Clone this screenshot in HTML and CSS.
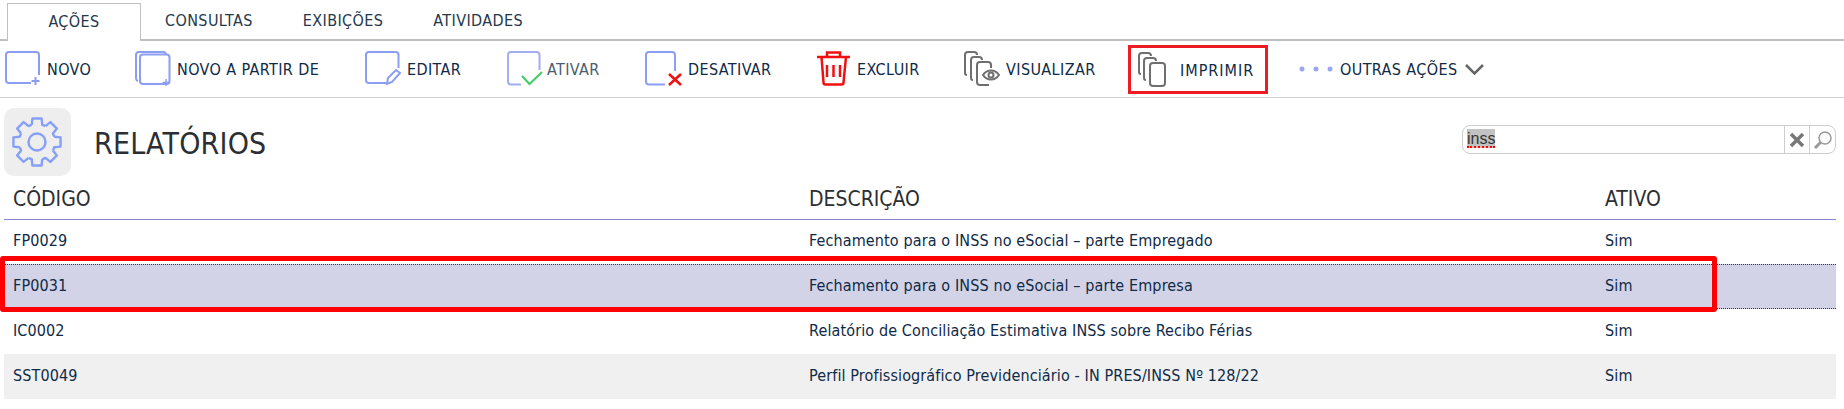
FILE: index.html
```html
<!DOCTYPE html>
<html lang="pt-BR">

<head>
  <meta charset="UTF-8">
  <title>Relatórios</title>
  <link rel="stylesheet" href="styles.css">
</head>

<body>
  <nav class="tabs">
    <div class="tabs__item tabs__item--active">AÇÕES</div>
    <div class="tabs__item">CONSULTAS</div>
    <div class="tabs__item">EXIBIÇÕES</div>
    <div class="tabs__item">ATIVIDADES</div>
  </nav>

  <div class="toolbar">
    <div class="action action--new">
      <svg class="action__icon" width="36" height="36" viewBox="0 0 36 36">
        <path class="blue" d="M34 24V4a3 3 0 0 0-3-3H4a3 3 0 0 0-3 3v25a3 3 0 0 0 3 3h22" />
        <path class="blue" d="M30.500 26v8M26.500 30h8" />
      </svg>
      <span class="action__label">NOVO</span>
    </div>
    <div class="action action--copy">
      <svg class="action__icon" width="36" height="36" viewBox="0 0 36 36">
        <path class="blue" d="M3 30a3 3 0 0 1-2-3V4a3 3 0 0 1 3-3h24a3 3 0 0 1 3 3" />
        <rect class="blue blue--white" x="5" y="3.500" width="29.500" height="29.500" rx="3" />
        <path class="blue blue--plus" d="M31 28v7M27.500 31.500h7" />
      </svg>
      <span class="action__label">NOVO A PARTIR DE</span>
    </div>
    <div class="action action--edit">
      <svg class="action__icon" width="36" height="36" viewBox="0 0 36 36">
        <path class="blue" d="M33.500 17V4a3 3 0 0 0-3-3H4a3 3 0 0 0-3 3v25a3 3 0 0 0 3 3h18" />
        <path class="blue" d="M22 33l1-6 8-8 4 3-8 9z" />
      </svg>
      <span class="action__label">EDITAR</span>
    </div>
    <div class="action action--on">
      <svg class="action__icon" width="36" height="36" viewBox="0 0 36 36">
        <path class="blue blue--light" d="M32.500 19V4a3 3 0 0 0-3-3H4a3 3 0 0 0-3 3v26.500a3 3 0 0 0 3 3h10" />
        <path class="green" d="M15 25l7.500 8L35 21" />
      </svg>
      <span class="action__label">ATIVAR</span>
    </div>
    <div class="action action--off">
      <svg class="action__icon" width="37" height="36" viewBox="0 0 37 36">
        <path class="blue" d="M30 20V4a3 3 0 0 0-3-3H4a3 3 0 0 0-3 3v26.500a3 3 0 0 0 3 3h16" />
        <path class="red" d="M24 23l12 11M36 23L24 34" />
      </svg>
      <span class="action__label">DESATIVAR</span>
    </div>
    <div class="action action--delete">
      <svg class="action__icon" width="35" height="36" viewBox="0 0 35 36">
        <path class="red" d="M1 6h33M11 6V1.500h13V6M5.500 6l2 25.500a2 2 0 0 0 2 2h16a2 2 0 0 0 2-2L30 6" />
        <path class="red" d="M11 14v12M17.500 14v12M24 14v12" />
      </svg>
      <span class="action__label">EXCLUIR</span>
    </div>
    <div class="action action--view">
      <svg class="action__icon" width="36" height="36" viewBox="0 0 36 36">
        <path class="gray" d="M3 24a2 2 0 0 1-2-2V4a3 3 0 0 1 3-3h6a3 3 0 0 1 3 3" />
        <path class="gray" d="M9 29a2 2 0 0 1-2-2V9a3 3 0 0 1 3-3h5a3 3 0 0 1 3 3" />
        <path class="gray" d="M25 34H16a3 3 0 0 1-3-3V14a3 3 0 0 1 3-3h8a3 3 0 0 1 3 3v3" />
        <path class="gray gray--white" d="M19 24c4-6 12-6 16 0-4 6-12 6-16 0z" />
        <circle class="gray" cx="27" cy="24" r="2.500" />
      </svg>
      <span class="action__label">VISUALIZAR</span>
    </div>
    <div class="action action--print">
      <svg class="action__icon" width="28" height="36" viewBox="0 0 28 36">
        <path class="gray" d="M3 22a2 2 0 0 1-2-2V4a3 3 0 0 1 3-3h6a3 3 0 0 1 3 3" />
        <path class="gray" d="M8 28a2 2 0 0 1-2-2V9a3 3 0 0 1 3-3h6a3 3 0 0 1 3 3" />
        <rect class="gray" x="12" y="11" width="15" height="23" rx="3" />
      </svg>
      <span class="action__label">IMPRIMIR</span>
    </div>
    <div class="action action--more">
      <svg class="action__dots" width="36" height="6" viewBox="0 0 36 6">
        <circle cx="4" cy="3" r="2.500" />
        <circle cx="18" cy="3" r="2.500" />
        <circle cx="32" cy="3" r="2.500" />
      </svg>
      <span class="action__label">OUTRAS AÇÕES</span>
      <svg class="action__chevron" width="19" height="11" viewBox="0 0 19 11">
        <path d="M1 1l8.500 8.500L18 1" />
      </svg>
    </div>
  </div>

  <header class="page-head">
    <div class="page-head__badge">
      <svg width="67" height="68" viewBox="-33 -34 67 68">
        <defs>
          <path id="tooth" d="M-5.260 -17.210L-4.580 -23.560L4.580 -23.560L5.260 -17.210A18 18 0 0 1 8.450 -15.890" />
        </defs>
        <g class="gear">
          <use href="#tooth" />
          <use href="#tooth" transform="rotate(45)" />
          <use href="#tooth" transform="rotate(90)" />
          <use href="#tooth" transform="rotate(135)" />
          <use href="#tooth" transform="rotate(180)" />
          <use href="#tooth" transform="rotate(225)" />
          <use href="#tooth" transform="rotate(270)" />
          <use href="#tooth" transform="rotate(315)" />
          <circle r="8.500" />
        </g>
      </svg>
    </div>

    <h1 class="page-head__title">RELATÓRIOS</h1>

    <div class="search">
      <div class="search__field"><span class="search__term">inss</span></div>
      <div class="search__btn">
        <svg width="16" height="16" viewBox="0 0 16 16">
          <path class="search__x" d="M2 2l12 12M14 2L2 14" />
        </svg>
      </div>
      <div class="search__btn search__btn--last">
        <svg width="20" height="20" viewBox="0 0 20 20">
          <circle class="search__glass" cx="12" cy="8" r="6" />
          <path class="search__handle" d="M7.500 12.500L2 18" />
        </svg>
      </div>
    </div>
  </header>

  <section class="report">
    <div class="report__row report__row--head">
      <div class="report__cell">CÓDIGO</div>
      <div class="report__cell">DESCRIÇÃO</div>
      <div class="report__cell">ATIVO</div>
    </div>

    <div class="report__body">
      <div class="report__row">
        <div class="report__cell">FP0029</div>
        <div class="report__cell">Fechamento para o INSS no eSocial – parte Empregado</div>
        <div class="report__cell">Sim</div>
      </div>
      <div class="report__row report__row--selected">
        <div class="report__cell">FP0031</div>
        <div class="report__cell">Fechamento para o INSS no eSocial – parte Empresa</div>
        <div class="report__cell">Sim</div>
      </div>
      <div class="report__row">
        <div class="report__cell">IC0002</div>
        <div class="report__cell">Relatório de Conciliação Estimativa INSS sobre Recibo Férias</div>
        <div class="report__cell">Sim</div>
      </div>
      <div class="report__row report__row--alt">
        <div class="report__cell">SST0049</div>
        <div class="report__cell">Perfil Profissiográfico Previdenciário - IN PRES/INSS Nº 128/22</div>
        <div class="report__cell">Sim</div>
      </div>

      <div class="report__marker"></div>
    </div>
  </section>
</body>

</html>
```

FILE: styles.css
```css
body {
  margin: 0;
  background: #fff;
  color: #0f2a47;
  font-family: 'DejaVu Sans', 'Noto Sans', sans-serif;
  font-stretch: condensed;
  font-size: 16px;
}

.tabs {
  display: flex;
  height: 36px;
  padding: 3px 0 0 7px;
  border-bottom: 2px solid #c0c0c0;
  letter-spacing: 0.400px;
}

.tabs__item {
  padding: 0 25px;
  line-height: 36px;
  color: #26384c;
}

.tabs__item--active {
  width: 132px;
  height: 37px;
  padding: 0;
  margin-right: -1px;
  text-align: center;
  background: #fff;
  border: 1px solid #c0c0c0;
  border-bottom: none;
}

.toolbar {
  display: flex;
  align-items: center;
  height: 56px;
  padding-left: 5px;
  border-bottom: 1px solid #cfcfcf;
  letter-spacing: 0.400px;
}

.action {
  display: flex;
  align-items: center;
  white-space: nowrap;
}

.action__icon {
  margin-right: 6px;
  flex-shrink: 0;
  fill: none;
}

.action__label {
  padding-top: 1px;
}

.action--new { width: 130px; }
.action--copy { width: 230px; }
.action--edit { width: 142px; }
.action--on { width: 138px; color: #4b5d70; }
.action--on .action__icon { margin-right: 4px; }
.action--off { width: 171px; }
.action--delete { width: 148px; }
.action--view { width: 164px; }

.action--print {
  width: 140px;
  height: 49px;
  margin-right: 30px;
  padding-left: 7px;
  box-sizing: border-box;
  border: 3px solid #ed1c24;
  letter-spacing: 1px;
}

.action--print .action__icon {
  margin-top: 1px;
  margin-right: 14px;
}

.action--print .action__label {
  padding-top: 2px;
}

.action__dots {
  margin-right: 6px;
  fill: #9aa6f2;
}

.action__chevron {
  margin-left: 7px;
  fill: none;
  stroke: #666;
  stroke-width: 2.500;
}

.blue,
.green,
.red,
.gray {
  fill: none;
  stroke-width: 2;
}

.blue { stroke: #8c9ef2; }
.blue--light { stroke: #a3aef0; }
.blue--white { fill: #fff; }
.blue--plus { stroke-width: 1.500; }
.green { stroke: #3fce63; }
.red { stroke: #f01010; stroke-width: 2.500; }
.gray { stroke: #6f6f6f; }
.gray--white { fill: #fff; }

.page-head {
  display: flex;
  align-items: center;
  padding: 10px 8px 0 4px;
}

.page-head__badge {
  width: 67px;
  height: 68px;
  border-radius: 10px;
  background: #eee;
}

.gear {
  fill: none;
  stroke: #86a0fa;
  stroke-width: 2.400;
  stroke-linejoin: round;
}

.page-head__title {
  flex: 1;
  margin: 2px 0 0 23px;
  font-size: 30px;
  font-weight: normal;
  letter-spacing: 0.200px;
  color: #2b2f33;
}

.search {
  display: flex;
  width: 374px;
  height: 29px;
  margin-bottom: 5px;
  box-sizing: border-box;
  border: 1px solid #cdcdcd;
  border-radius: 8px;
}

.search__field {
  flex: 1;
  padding: 3px 0 0 4px;
  font-family: 'Liberation Sans', sans-serif;
  font-stretch: normal;
  font-size: 16px;
  line-height: 19px;
  color: #333;
}

.search__term {
  display: inline-block;
  background: #c2c2c2;
  border-bottom: 2px dotted #f00;
  height: 17px;
}

.search__btn {
  display: flex;
  align-items: center;
  justify-content: center;
  width: 24px;
  border-left: 1px solid #cdcdcd;
}

.search__btn--last {
  width: 25px;
}

.search__x {
  fill: none;
  stroke: #777;
  stroke-width: 3.500;
}

.search__glass {
  fill: none;
  stroke: #999;
  stroke-width: 1.500;
}

.search__handle {
  fill: none;
  stroke: #999;
  stroke-width: 3;
}

.report {
  padding: 0 8px 0 4px;
  letter-spacing: 0.120px;
}

.report__row {
  display: grid;
  grid-template-columns: 796px 796px 1fr;
  align-items: center;
  height: 45px;
  box-sizing: border-box;
}

.report__cell {
  padding: 0 9px 3px;
}

.report__row--head {
  height: 44px;
  padding-top: 5px;
  border-bottom: 1px solid #8585d6;
  font-size: 21px;
  letter-spacing: 0;
  color: #2b2f33;
}

.report__body {
  position: relative;
}

.report__row:first-child {
  height: 44px;
}

.report__row--selected {
  background: #d2d3e6;
  border-top: 1px dotted #333;
  border-bottom: 1px dotted #333;
}

.report__row--alt {
  background: #f0f0f0;
}

.report__marker {
  position: absolute;
  top: 36px;
  left: -4px;
  width: 1717px;
  height: 56px;
  box-sizing: border-box;
  border: 5px solid #f00;
  border-radius: 3px;
}
```
